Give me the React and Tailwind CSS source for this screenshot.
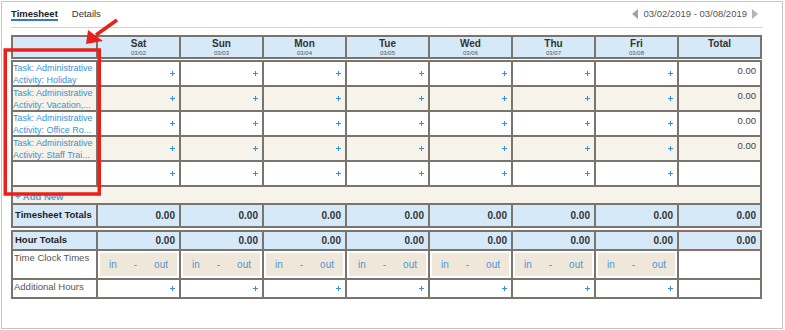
import React from "react";

const days = [
  ["Sat", "03/02"],
  ["Sun", "03/03"],
  ["Mon", "03/04"],
  ["Tue", "03/05"],
  ["Wed", "03/06"],
  ["Thu", "03/07"],
  ["Fri", "03/08"],
];

const tasks = [
  { activity: "Activity: Holiday", bg: "bg-white" },
  { activity: "Activity: Vacation,...", bg: "bg-[#f6f3ea]" },
  { activity: "Activity: Office Ro...", bg: "bg-white" },
  { activity: "Activity: Staff Trai...", bg: "bg-[#f6f3ea]" },
];

const gridCols =
  "grid grid-cols-[83px_repeat(7,81px)_81px] gap-[2px] p-[2px] bg-[#7a746e] w-[751px]";

// small blue plus used in the empty day cells
const Plus = () => (
  <svg width="5" height="5" viewBox="0 0 5 5" shapeRendering="crispEdges">
    <rect x="0" y="2" width="5" height="1" fill="#3b8be0" />
    <rect x="2" y="0" width="1" height="5" fill="#3b8be0" />
  </svg>
);

const App = () => {
  return (
    <div
      className="relative w-[785px] h-[330px] bg-white pt-px pl-px text-[9.5px] text-[#444]"
      style={{ fontFamily: '"Liberation Sans", Arial, sans-serif' }}
    >
      <div className="w-[782px] h-[328px] border border-[#c6c6c6] px-[9px]">
        {/* Tabs + date nav */}
        <div className="flex items-start h-[26px] w-[752px] border-b border-[#d2d2d2] pt-[7px]">
          <span className="font-bold text-[#222] leading-[10px] border-b-2 border-[#2d7fc1]">
            Timesheet
          </span>
          <span className="ml-[14px] text-[#333] leading-[10px]">Details</span>
          <div className="ml-auto mr-[5px] flex items-center gap-[5px] leading-[10px] text-[#555]">
            <svg width="6" height="10" viewBox="0 0 6 10">
              <polygon points="6,0 6,10 0,5" fill="#a3a3a3" />
            </svg>
            <span>03/02/2019 - 03/08/2019</span>
            <svg width="6" height="10" viewBox="0 0 6 10">
              <polygon points="0,0 0,10 6,5" fill="#b5b5b5" />
            </svg>
          </div>
        </div>

        {/* Header */}
        <div className={`${gridCols} mt-[7px]`}>
          <div className="h-[20px] bg-[#d6e9f8]" />
          {days.map(([d, date]) => (
            <div
              key={d}
              className="h-[20px] bg-[#d6e9f8] flex flex-col items-center pt-[1px]"
            >
              <span className="font-bold text-[10px] text-[#333] leading-[11px]">
                {d}
              </span>
              <span className="text-[6px] text-[#555] leading-[8px]">{date}</span>
            </div>
          ))}
          <div className="h-[20px] bg-[#d6e9f8] flex justify-center pt-[1px]">
            <span className="font-bold text-[10px] text-[#333] leading-[11px]">
              Total
            </span>
          </div>
        </div>

        {/* Body */}
        <div className={`${gridCols} mt-[1px]`}>
          {tasks.map((t, i) => (
            <React.Fragment key={i}>
              <div
                className={`h-[23px] ${t.bg} text-[9px] text-[#3d8fd6] leading-[12px] whitespace-nowrap`}
              >
                <div>Task: Administrative</div>
                <div>{t.activity}</div>
              </div>
              {days.map(([d]) => (
                <div
                  key={d}
                  className={`h-[23px] ${t.bg} flex items-center justify-end pr-[4px]`}
                >
                  <Plus />
                </div>
              ))}
              <div
                className={`h-[23px] ${t.bg} flex justify-end pr-[4px] pt-[2px] text-[#444]`}
              >
                0.00
              </div>
            </React.Fragment>
          ))}
          <div className="h-[23px] bg-white" />
          {days.map(([d]) => (
            <div
              key={d}
              className="h-[23px] bg-white flex items-center justify-end pr-[4px]"
            >
              <Plus />
            </div>
          ))}
          <div className="h-[23px] bg-white" />

          <div className="col-span-9 h-[16px] bg-[#f6f3ea] pl-[2px] flex items-end">
            <span className="font-bold text-[#5b9bd9] leading-[12px]">+ Add New</span>
          </div>

          <div className="h-[21px] bg-[#d6e9f8] flex items-center pl-[2px] font-bold text-[9.5px] text-[#222]">
            Timesheet Totals
          </div>
          {days.map(([d]) => (
            <div
              key={d}
              className="h-[21px] bg-[#d6e9f8] flex items-center justify-end pr-[4px] font-bold text-[10px] text-[#333]"
            >
              0.00
            </div>
          ))}
          <div className="h-[21px] bg-[#d6e9f8] flex items-center justify-end pr-[4px] font-bold text-[10px] text-[#333]">
            0.00
          </div>
        </div>

        {/* Hour totals */}
        <div className={`${gridCols} mt-[2px]`}>
          <div className="h-[17px] bg-[#d6e9f8] flex items-center pl-[2px] font-bold text-[9.5px] text-[#222]">
            Hour Totals
          </div>
          {days.map(([d]) => (
            <div
              key={d}
              className="h-[17px] bg-[#d6e9f8] flex items-center justify-end pr-[4px] font-bold text-[10px] text-[#333]"
            >
              0.00
            </div>
          ))}
          <div className="h-[17px] bg-[#d6e9f8] flex items-center justify-end pr-[4px] font-bold text-[10px] text-[#333] shadow-[0_-2px_0_#9c6a62,0_2px_0_#9c6a62]">
            0.00
          </div>

          <div className="h-[27px] bg-white pl-[1px] pt-[1px] text-[#555] leading-[11px]">
            Time Clock Times
          </div>
          {days.map(([d]) => (
            <div key={d} className="h-[27px] bg-white p-[2px]">
              <div className="h-full bg-[#efe8da] flex items-center justify-between px-[9px] text-[#4f95d8] text-[10px]">
                <span>in</span>
                <span>-</span>
                <span>out</span>
              </div>
            </div>
          ))}
          <div className="h-[27px] bg-white" />

          <div className="h-[17px] bg-white pl-[1px] pt-[1px] text-[#555] leading-[11px]">
            Additional Hours
          </div>
          {days.map(([d]) => (
            <div
              key={d}
              className="h-[17px] bg-white flex items-center justify-end pr-[4px]"
            >
              <Plus />
            </div>
          ))}
          <div className="h-[17px] bg-white" />
        </div>
      </div>

      {/* Annotation overlay */}
      <svg
        className="absolute left-0 top-0 pointer-events-none"
        width="785"
        height="330"
        viewBox="0 0 785 330"
      >
        <rect
          x="5.25"
          y="50"
          width="94"
          height="144"
          fill="none"
          stroke="#e8211d"
          strokeWidth="3.5"
        />
        <line
          x1="117"
          y1="20"
          x2="96"
          y2="35"
          stroke="#e8211d"
          strokeWidth="3.5"
        />
        <polygon points="86,44 88,30 103,41" fill="#e8211d" />
      </svg>
    </div>
  );
};

export default App;
